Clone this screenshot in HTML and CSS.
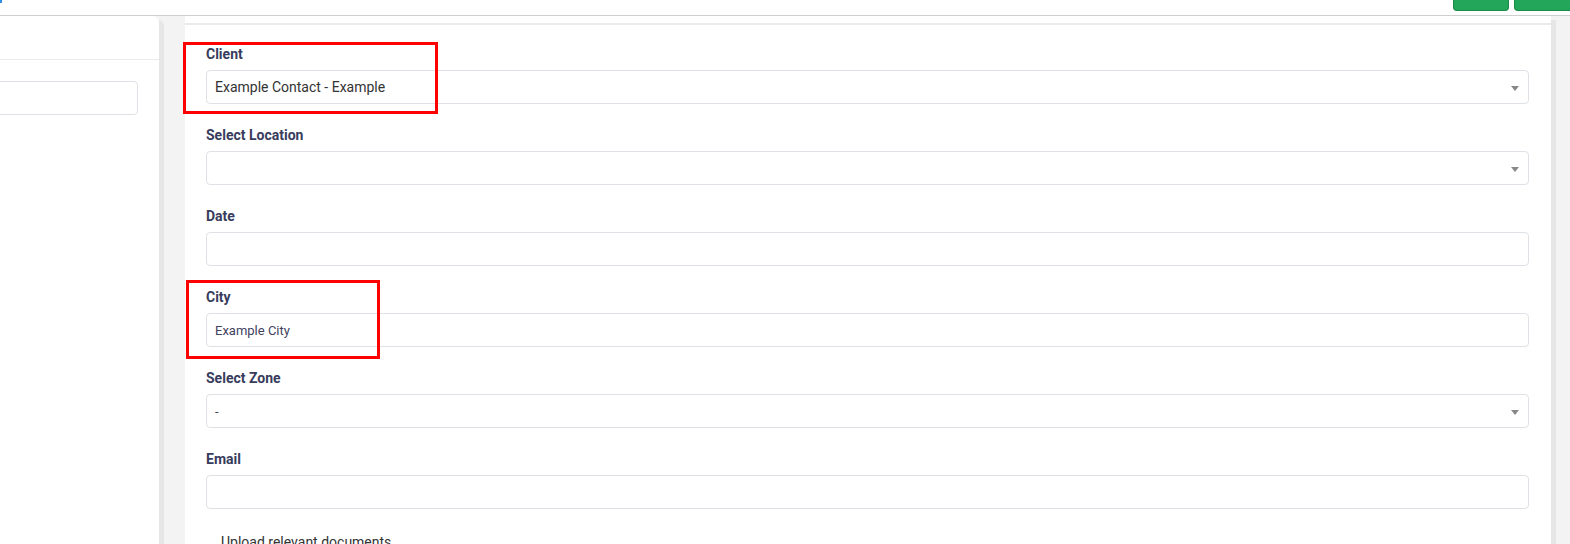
FILE: index.html
```html
<!DOCTYPE html>
<html lang="en">
<head>
    <meta charset="UTF-8">
    <meta name="viewport" content="width=device-width, initial-scale=1.0">
    <title>New Visit</title>
    <link rel="stylesheet" href="styles.css">
</head>
<body>
    <div class="topbar">
        <span class="brand-dot"></span>
        <div class="top-actions">
            <span class="btn-green"></span>
            <span class="btn-green wide"></span>
        </div>
    </div>

    <div class="layout">
        <!-- sidebar -->
        <div class="sidebar">
            <div class="sidebar-head"></div>
            <div class="sidebar-search"></div>
        </div>

        <!-- formulario -->
        <div class="main">
            <form class="visit-form">
                <div class="group">
                    <label>Client</label>
                    <div class="field select">
                        <span class="value">Example Contact - Example</span>
                        <span class="arrow"></span>
                    </div>
                </div>

                <div class="group">
                    <label>Select Location</label>
                    <div class="field select">
                        <span class="value"></span>
                        <span class="arrow"></span>
                    </div>
                </div>

                <div class="group">
                    <label>Date</label>
                    <div class="field"></div>
                </div>

                <div class="group">
                    <label>City</label>
                    <div class="field small">Example City</div>
                </div>

                <div class="group">
                    <label>Select Zone</label>
                    <div class="field select small">
                        <span class="value">-</span>
                        <span class="arrow"></span>
                    </div>
                </div>

                <div class="group">
                    <label>Email</label>
                    <div class="field"></div>
                </div>

                <div class="upload">Upload relevant documents</div>
            </form>
        </div>
    </div>

    <!-- marcas rojas -->
    <div class="mark mark-client"></div>
    <div class="mark mark-city"></div>
</body>
</html>
```

FILE: styles.css
```css
* {
    margin: 0;
    padding: 0;
    box-sizing: border-box;
}
html, body {
    height: 100%;
    overflow: hidden;
}
body {
    font-family: Roboto, "Liberation Sans", sans-serif;
    background-color: #f3f3f3;
    position: relative;
}

/* barra superior */
.topbar {
    height: 16px;
    background-color: #fff;
    border-bottom: 1px solid #cfcfcf;
    display: flex;
    justify-content: space-between;
    overflow: hidden;
}
.brand-dot {
    width: 2px;
    height: 3px;
    background-color: #2f8ee0;
}
.top-actions {
    display: flex;
    gap: 5px;
    margin-right: -30px;
}
.btn-green {
    width: 56px;
    height: 11px;
    background-color: #23a55a;
    border: 1px solid #1b8a48;
    border-top: none;
    border-radius: 0 0 4px 4px;
}
.btn-green.wide {
    width: 86px;
}

/* columnas */
.layout {
    display: flex;
    height: calc(100% - 16px);
}
.sidebar {
    width: 159px;
    flex-shrink: 0;
    background-color: #fff;
    border-radius: 0 6px 0 0;
    box-shadow: 5px 4px 0 #e6e6e6;
    overflow: hidden;
}
.sidebar-head {
    height: 44px;
    border-bottom: 1px solid #e9ecef;
}
.sidebar-search {
    height: 34px;
    margin: 21px 21px 0 -10px;
    border: 1px solid #dee2e6;
    border-radius: 4px;
}
.main {
    flex: 1;
    margin: 0 19px 0 26px;
    background-color: #fff;
    box-shadow: 5px 4px 0 #e6e6e6;
    border-top: 7px solid #fff;
}
.visit-form {
    border-top: 2px solid #e9ecef;
    padding: 19px 22px 0 21px;
}

/* campos */
.group {
    margin-bottom: 21px;
}
.group label {
    display: block;
    font-size: 14px;
    font-weight: 700;
    line-height: 20px;
    color: #383c5c;
    margin-bottom: 6px;
}
.field {
    height: 34px;
    border: 1px solid #dee2e6;
    border-radius: 4px;
    padding: 0 8px;
    display: flex;
    align-items: center;
    font-size: 14px;
    color: #333;
}
.field.small {
    font-size: 13px;
    color: #43425f;
}
.select .value {
    flex: 1;
}
.arrow {
    width: 0;
    height: 0;
    border-style: solid;
    border-width: 5px 4px 0 4px;
    border-color: #888 transparent transparent transparent;
    margin-right: 1px;
    margin-top: 2px;
}
.upload {
    font-size: 14px;
    color: #333;
    padding: 4px 0 0 15px;
}

/* anotaciones */
.mark {
    position: absolute;
    border: 3px solid #ff0000;
}
.mark-client {
    left: 183px;
    top: 42px;
    width: 255px;
    height: 72px;
}
.mark-city {
    left: 186px;
    top: 280px;
    width: 194px;
    height: 79px;
}
```
